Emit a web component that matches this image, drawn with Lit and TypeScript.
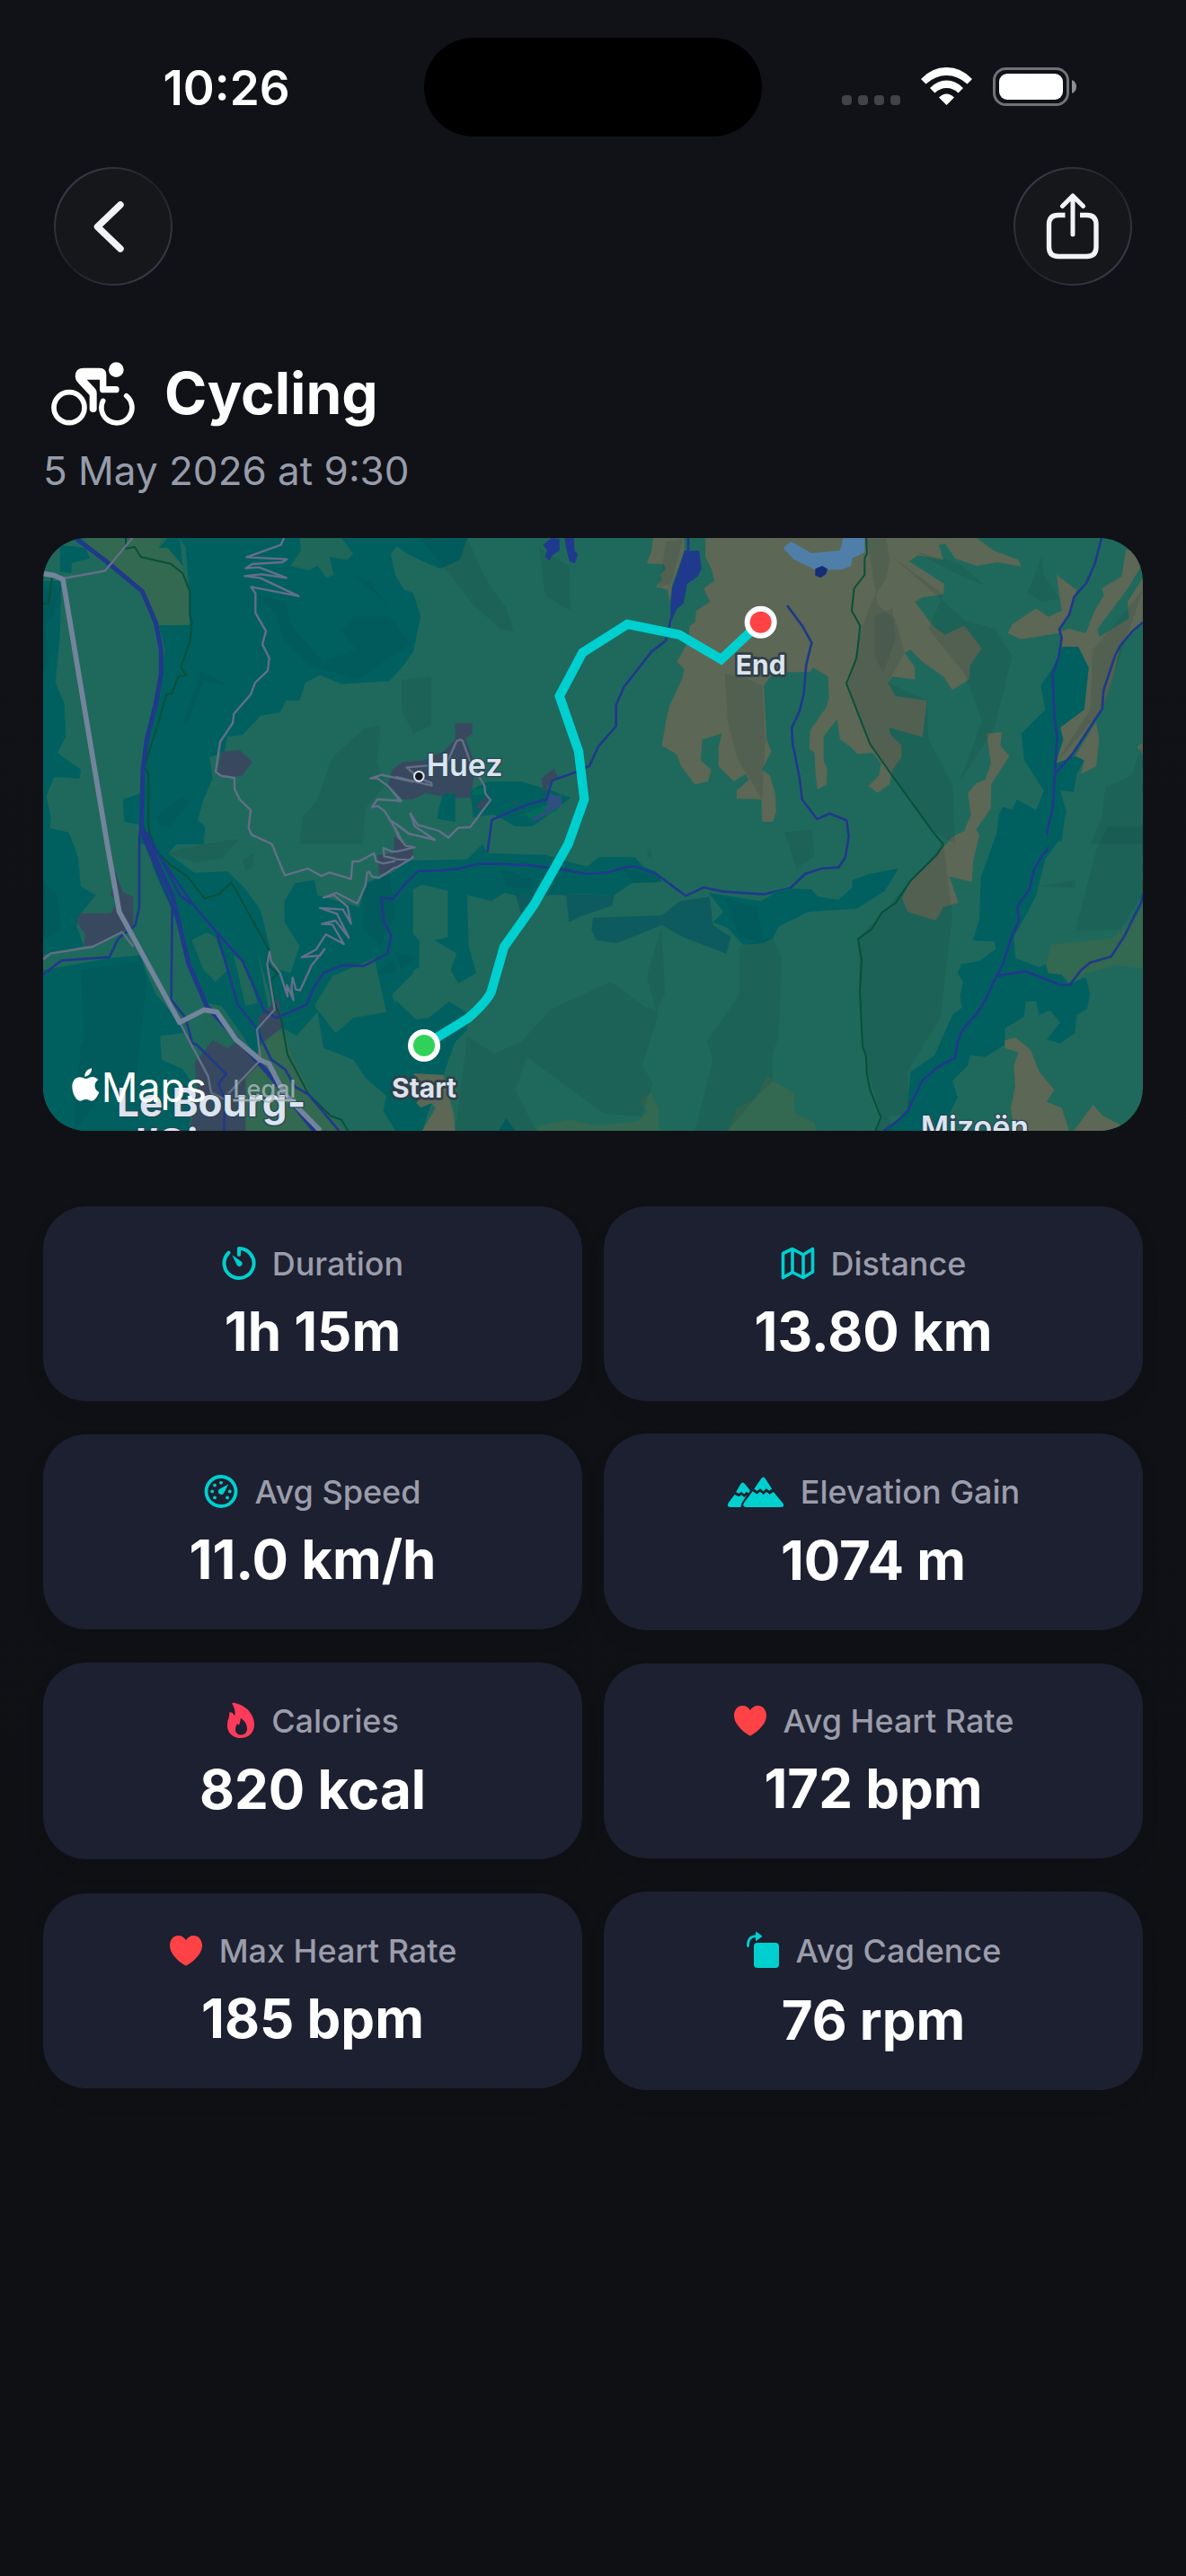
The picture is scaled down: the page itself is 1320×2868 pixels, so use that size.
import { LitElement, html, css, svg } from 'lit';
import { customElement, property } from 'lit/decorators.js';

const stats = [
  { icon: 'timer', label: 'Duration', value: '1h 15m' },
  { icon: 'map', label: 'Distance', value: '13.80 km' },
  { icon: 'gauge', label: 'Avg Speed', value: '11.0 km/h' },
  { icon: 'mountain', label: 'Elevation Gain', value: '1074 m' },
  { icon: 'flame', label: 'Calories', value: '820 kcal' },
  { icon: 'heart', label: 'Avg Heart Rate', value: '172 bpm' },
  { icon: 'heart', label: 'Max Heart Rate', value: '185 bpm' },
  { icon: 'rotate', label: 'Avg Cadence', value: '76 rpm' },
];

// the taller symbols make their cards slightly taller
const icons = {
  timer: html`
    <svg width="38" height="43" viewBox="0 0 38 43" fill="none" stroke="#00cfcf" stroke-width="4" stroke-linecap="round" stroke-linejoin="round">
      <path d="M19 12V5A16.500 16.500 0 1 1 7.500 9.700" />
      <path d="M11.300 12.200l9.600 6.700a3.200 3.200 0 1 1-4.300 4.300z" fill="#00cfcf" stroke="none" />
    </svg>`,
  map: html`
    <svg width="38" height="43" viewBox="0 0 38 43" fill="none" stroke="#00cfcf" stroke-width="3.600" stroke-linejoin="round">
      <path d="M2.500 10.500L13 5.500l12 6.500 10.500-6.500v25.500L25 37.500l-12-6-10.500 6z" />
      <path d="M13 5.500v26M25 12v25.500" />
    </svg>`,
  gauge: html`
    <svg width="38" height="43" viewBox="0 0 38 43" fill="#00cfcf">
      <circle cx="19" cy="21.500" r="16.500" fill="none" stroke="#00cfcf" stroke-width="3.800" />
      <circle cx="19" cy="11.800" r="1.900" />
      <circle cx="12" cy="14.600" r="1.900" />
      <circle cx="9.200" cy="21.500" r="1.900" />
      <circle cx="12" cy="28.400" r="1.900" />
      <circle cx="26" cy="28.400" r="1.900" />
      <circle cx="28.800" cy="21.500" r="1.900" />
      <path d="M27.200 13.600l-5 9.600a3.400 3.400 0 1 1-4.800-4.500z" />
    </svg>`,
  mountain: html`
    <svg width="64" height="45" viewBox="0 0 64 45" fill="#00cfcf">
      <path d="M38 8.500q2.500-4 5 0l7.200 11.200-3 2.100-3.400-2.500-3.200 3.100-3.400-3.200-3.600 2.800-3.300-2.300z" />
      <path d="M28.600 22.200l4.900 3.300 3.500-2.700 3.600 3.300 3.500-3.100 3.600 2.700 4.100-2.800 10.500 12.600q2.500 4-2 4.500H21.500q-5-.500-2.300-5z" />
      <path d="M15.500 14q2.200-3.200 4.400 0l6 7.600-1.700 2.800-2.200-1.400-2.800 2.600-3-2.600-2.700 1.800-3.400-1.600z" />
      <path d="M8.600 25.900l4.800 2.300 2.700-1.900 3.200 2.700 3-2.500-4.800 7.500q-2.500 3.500-1.500 6H4q-4.500-.500-2.500-4.500z" />
    </svg>`,
  flame: html`
    <svg width="32" height="45" viewBox="0 0 32 45">
      <path fill="#ff3b5c" fill-rule="evenodd" d="M6.500 4C6 2.800 7 2.500 9 3c12 2.300 22 12 22 24 0 9-6.500 15-15 15S1 36.500 1 28c0-6 2.500-9 2.300-13.500C3.300 13 5 12.800 6.500 14c1.500 1.300 2 2.300 2.500 3.500 1.800-4.500-.5-9.500-2.500-13.500zM15.500 20c.5 4-1 5.500-1.500 8-.8-.8-1.200-1.500-2-2-1 2-2 4-2 6.500 0 4 3 6 6.500 6s6.500-2.500 6.500-7c0-5-3-9.500-7.500-11.500z" />
    </svg>`,
  heart: html`
    <svg width="38" height="43" viewBox="0 0 38 43">
      <path fill="#ff4245" d="M19 38.500c-1 0-18-10-18-22.500C1 9.500 5.200 5 10.500 5c3.700 0 6.700 2 8.500 5.300C20.800 7 23.800 5 27.500 5 32.800 5 37 9.500 37 16c0 12.500-17 22.500-18 22.500z" />
    </svg>`,
  rotate: html`
    <svg width="38" height="47" viewBox="0 0 38 47" fill="#00cfcf">
      <rect x="9" y="15" width="28" height="28" rx="4" />
      <path d="M2.500 18.500C2 11.500 5.500 7.700 11.500 7.700" fill="none" stroke="#00cfcf" stroke-width="2.800" stroke-linecap="round" />
      <path d="M11 3.500q0-1.500 1.200-.5l5.500 4q1 .8 0 1.600l-5.500 4q-1.200.8-1.200-.6z" />
    </svg>`,
};

@customElement('route-map')
class RouteMap extends LitElement {
  static styles = css`
    :host {
      display: block;
      overflow: hidden;
      border-radius: 48px;
      background: #1f695c;
    }

    .map {
      display: block;
      width: 100%;
      height: auto;
      font-family: Inter, 'Liberation Sans', sans-serif;
    }

    .forest { fill: #006060; }
    .meadow { fill: #1f6759; }
    .rock { fill: #5c6755; }
    .farm { fill: #336851; }
    .town { fill: #38495f; }
    .lake { fill: #1f3a8c; }
    .glacier { fill: #4f7ea9; }
    .scree { fill: #0d5b5e; }
    .shade { fill: #0a3038; opacity: 0.11; }

    .river, .border, .lane, .highway, .route {
      fill: none;
      stroke-linejoin: round;
    }

    .river { stroke: #20398a; stroke-width: 8; }
    .wide { stroke-width: 15; }
    .border { stroke: #08503a; stroke-width: 6; }
    .lane { stroke: #646f88; stroke-width: 7; }
    .highway { stroke: #73849c; stroke-width: 17; }
    .route { stroke: #00cfcf; stroke-width: 31; stroke-linejoin: miter; }

    .place {
      fill: #dbe4ef;
      stroke: #2c4654;
      stroke-width: 8;
      paint-order: stroke;
      font-size: 102px;
      font-weight: 600;
    }

    .city { font-size: 132px; font-weight: 700; }

    .pin-label {
      fill: #dde4ec;
      stroke: #323f49;
      stroke-width: 16;
      stroke-linejoin: round;
      paint-order: stroke;
      font-size: 90px;
      font-weight: 700;
      text-anchor: middle;
    }

    .brand { fill: #fff; font-size: 135px; }

    .legal {
      fill: #a9b9bd;
      opacity: 0.8;
      font-size: 81px;
      font-weight: 500;
      text-decoration: underline;
    }
  `;

  // terrain is drawn on six sheets, three across and two down
  renderNorth() {
    return svg`
      <g transform="translate(-24 -27)">
        <path class="forest" d="M480 27L500 60L512 200V318H410L430 400L415 520L360 720L350 880L290 900L295 975L345 985V1050H560V985L540 970L560 900L590 830L580 760L630 740L640 690L690 685L750 620L815 610L835 570L880 570L900 510L950 485L1020 515L1180 505L1230 450L1260 405L1285 290L1260 210L1230 200L1200 150L1185 80L1205 55L1240 80L1280 100L1350 130L1415 100L1440 27z" />
        <path class="meadow" d="M880 27H1020L1060 80L1040 100L980 90L995 150L970 160L940 120L910 135L850 120L885 70z" />
        <path class="farm" d="M165 27H420L410 60L470 60L490 130L512 200V318H410L360 200L250 120L180 80z" />
        <path class="forest" d="M24 170H85L80 360L65 510L95 580L100 690L72 745L150 800L145 830L60 825L35 890L50 960L40 1050H24zM80 50L165 60L180 95L120 110L118 145L80 140z" />
        <path class="forest" d="M410 60L440 27H480L490 120L440 60z" />
        <path class="town" d="M620 740L680 735L722 775L690 820L640 830L605 810zM1175 850L1190 800L1225 775L1290 770L1360 740L1400 700V645H1457V680L1435 700L1470 790L1450 895H1380L1300 880L1260 900H1225z" />
        <path class="shade" d="M735 215L800 280L825 360L910 450L1075 500L1160 440L1250 380L1180 290L1060 290L1020 340L1070 400L960 440L860 330L830 240z" />
        <path class="shade" d="M550 470L640 520L560 505L510 630L490 650L530 540zM1100 660L1150 650L1140 780L1170 850L1100 930L1090 1050H880L890 960L940 900L990 760zM1060 150L1140 190L1110 170L1180 260L1130 210zM24 200L85 190L60 280L30 320L45 420L24 480zM400 960L490 890L510 910L430 1010z" />
        <path class="border" d="M300 27V62L330 57L350 90L450 113L490 145L514 205V285L521 305L515 370L484 460L503 485L475 490L455 545L436 550L410 640L362 790L376 815V1010L392 1050M55 150L42 246H24" />
        <path class="river wide" d="M125 22L235 105L355 205L400 310L418 400V480L400 580L370 700L357 800L352 1010" />
        <path class="lane" d="M90 162L230 137L322 27M828 27L818 50L703 91L838 98L822 108L722 114L700 128L745 125L836 160L752 148L697 154L748 160L877 221L718 190L733 212V277L768 338L756 382L779 428L774 470L732 510L717 550L661 614L657 645L615 708L600 808L620 822L663 828V865L680 900L717 936L710 994L720 1018L790 1050" />
        <path class="lane" d="M1260 842L1155 818L1117 830L1140 830L1175 855L1220 905L1140 900L1122 926L1142 922L1165 940L1195 990L1220 1035M1185 970L1245 1015L1260 1018" />
      </g>
      <g transform="translate(1176 -27)">
        <path class="rock" d="M860 27L855 70L840 112L895 115L903 130L885 150L890 165L870 190L910 200L915 240L925 180L965 70V27z" />
        <path class="rock" d="M1035 27V90L1055 130L1065 170L1030 195L1050 240L1005 270L1000 310L982 320L980 370L940 440L965 465L960 490L915 590L905 630L890 720L940 750L955 790L1000 850L1045 840L1055 800L1020 770L1025 700L1090 680L1078 730L1080 790L1130 840L1170 815L1180 835L1140 870V898L1222 900L1225 975H1260L1272 940L1268 880L1250 820L1225 800L1255 740L1240 700L1230 520L1265 475V27z" />
        <path class="forest" d="M250 870L310 840L420 840L520 870L585 895L540 930L460 990H400L330 950L260 960zM145 930L160 880L200 880V975L140 965z" />
        <path class="town" d="M487 830L530 795L545 830L520 840L495 880zM265 930L310 880L300 930zM385 900L420 920L400 915z" />
        <path fill="#006b58" d="M425 950L500 920L555 880L540 940L460 970zM258 865L300 862L290 885H258z" />
        <path fill="#2f4f80" d="M515 880L555 890V920L460 975L455 965L500 940z" />
        <path class="shade" d="M80 27H240L300 160L370 260L395 340L350 330L260 250L190 160zM1100 480L1110 640L1140 760L1225 900L1235 700L1225 520L1160 490zM480 60L580 120L585 270L620 290L500 220zM20 500L120 490V650L60 680L20 600zM905 40L960 30L920 180L880 190z" />
        <path class="lake" d="M965 70H1015L1022 130L1010 155L975 180L972 195L962 245L940 265L925 297H918L920 240L925 190L940 150zM520 27L548 30V70L525 85L515 103L500 90L507 68L493 50zM565 27H597L598 70L610 80L600 112L582 105L570 60z" />
        <path class="river" d="M978 27V70M920 297L903 370L855 407L763 525L737 585V655L678 723L648 788L600 810L523 837L505 900L440 918L322 968L303 1114" />
        <path class="lane" d="M0 825L122 854L120 845L80 830L38 793L170 782L205 705L218 700L225 705L250 775L298 855L300 880L318 902L250 993L210 995L177 1028L145 1005L75 985L50 947L65 990L132 1035L48 1015L0 980M-14 868L18 907L0 902" />
      </g>
      <g transform="translate(2436 -27)">
        <path class="rock" d="M0 27V475H125L135 460L185 490L188 560L180 590L125 670L122 730L140 745L143 820L150 868L180 850L182 800L170 770V690L215 632L225 700L260 725L282 748L335 745L362 780L355 820L320 855L350 878L390 850L400 800L430 760V720L390 680V660L500 692L515 570L410 555L385 510L400 490L475 500V460L440 410L460 400L500 440L570 490L600 535L655 500L660 450L698 395L640 320L575 350L535 320L475 240L500 225L570 215L573 180L455 105L485 85L570 100L555 50L575 45L610 95L680 120L750 108L830 122L820 100L740 70L680 27z" />
        <path class="rock" d="M948 150L1015 200L990 280L955 345L830 365L785 345L800 315L880 262L920 290L965 270z" />
        <path class="rock" d="M1180 65L1215 75L1230 120L1190 190L1130 270L1085 330L1090 358L1190 295L1185 240L1236 160V310L1160 390L1140 480L1100 600L1000 750L960 790L945 780L970 700L960 660L1040 600L1055 460L1020 390H965L960 340L990 330L1045 345L1075 270L1105 220L1100 195L1165 155zM1080 640L1090 700L1080 790L1030 815L1040 770L1010 755zM1236 710L1218 725L1236 750z" />
        <path class="rock" d="M715 680L765 675L760 720L790 755L730 850L728 930L680 1000L690 1020L670 1100L665 1175L590 1158L620 1245L570 1260L545 1305L450 1275L432 1230L460 1170L548 1085L600 1025L640 1005L662 950L652 880L680 845L710 835L728 780z" />
        <path class="forest" d="M970 390H1020L1055 460L1040 600L960 660L970 700L945 780L1010 755L1040 770L1015 815L1005 875L960 870L980 940L970 1000L965 1040H745L755 950L770 925L800 935L815 900L880 935L905 870L840 770L830 680L910 600L895 520L935 460z" />
        <path class="shade" d="M315 30H380L390 100L380 160L330 240L300 320L250 520L330 720L540 1010L610 1050L600 850L520 700L515 570L385 510L440 410L410 300L350 250z" />
        <path class="shade" d="M485 75L620 110L710 185L640 160L560 120zM850 210L900 85L905 150L960 230L900 240zM400 90L570 215L520 330L640 480L700 640L620 850L740 660L800 420L740 330L640 300zM1236 200L1070 400L1060 600L945 780L1100 600zM340 290L400 260L410 360L370 480L340 420zM1110 860L1200 820L1236 700V1050H1060L1100 960z" />
        <path class="glacier" d="M60 38L130 78L225 68L235 27H307V75L265 95L262 120L230 133H140L70 98L35 60z" />
        <path fill="#162d77" d="M142 130L165 120L183 130L178 148L160 160L142 152z" />
        <path class="border" d="M312 27L315 78L307 95V150L272 195L264 270L292 320L280 428L246 513L325 715L400 822L540 1015L570 1050" />
        <path class="river" d="M48 252L100 322L130 377L112 450L104 545L90 605L64 660L66 710L90 830L98 900L148 966L190 947L247 970L254 1025L242 1094" />
        <path class="river" d="M1098 27L1075 115L1047 178L1007 223L990 283L957 332L965 360L955 425L935 482L940 625L950 690L942 815L935 930L917 1000V1068M1236 308L1200 340L1160 387L1143 420L1105 535L1100 598L1000 750L942 815" />
      </g>`;
  }

  renderSouth() {
    return svg`
      <g transform="translate(-24 963)">
        <path class="forest" d="M24 0L110 20L140 100L150 200L200 230L150 290L135 330L160 400L24 430zM24 480L245 440L350 430L365 480L400 560L450 620L500 690L415 700L420 780L490 810L530 870L510 1017H60L24 960z" />
        <path class="forest" d="M350 0H565L560 55L470 60L440 90L530 155L640 150L700 210L750 280L780 400L790 470L850 490L880 400L830 320V250L865 190L930 180L940 230L1080 270L1100 190L1180 160L1260 120V490L1190 560L1200 600L1260 640V1017H1200L1160 950L1170 900L1100 840L1060 780L1010 760L960 740L940 620L870 700L800 660L780 560L740 420L790 680L740 780L690 700L620 600L570 590L540 520L450 270L395 150z" />
        <path class="meadow" d="M520 380L570 355L600 370L640 480L600 520L560 480zM660 430L700 460L740 590L700 600zM560 610L610 620L670 720L600 760L550 720z" />
        <path class="meadow" d="M990 500L1130 440L1170 620L1060 640L1000 690L930 600z" />
        <path class="farm" d="M700 840L780 670L830 690L850 760L920 900L990 970L1030 1017H700z" />
        <path class="town" d="M265 150L290 220L325 235V330L290 350L210 395L160 400L165 360L135 320L150 290H250L270 250L250 230zM530 790L590 715L640 740L670 720L750 790L700 840V1017H510L540 900zM740 640L810 575L825 670L760 720zM1195 35L1225 50L1259 75V110L1190 150L1145 160L1140 95L1195 90z" />
        <path class="shade" d="M24 180L70 230L85 340L24 380zM150 480L350 450L370 520L330 880L220 900L130 1017V880L160 700zM430 90L560 60L680 40L620 110L530 120zM690 110L730 90L720 140L700 150zM1095 200L1180 160L1200 300L1150 400L1090 340zM145 740L165 710V810L150 800zM1140 490L1190 445L1220 490z" />
        <path class="border" d="M376 0L380 25L405 85L450 130L505 167L563 241L608 228L653 188L722 312L779 415L770 458L806 491L784 515L797 590L820 650L840 762L910 895L985 968L1020 980L1042 1017" />
        <path class="river" d="M350 0L345 40V270L332 330L275 375L245 437L85 448L24 495M350 20L455 270L452 580L500 640L522 725L535 728L635 827L610 860L630 915L628 1017" />
        <path class="river" d="M370 20L450 170L480 230L520 260M605 360L675 597L735 672L785 778L832 812L865 870L910 895L1012 1017" />
        <path class="river wide" d="M352 0L400 110L455 230L510 460L570 600L780 830L930 1017" />
        <path class="river" d="M1259 167L1192 243L1152 238L1162 317L1186 365L1174 425L1095 466L1022 464L960 490L930 535L902 597L802 640L762 615L690 450L600 350L520 255L350 10" />
        <path class="lane" d="M788 60L831 164L908 141L953 166L980 154L1052 176L1057 117H1079L1129 90L1136 117L1160 124L1259 104L1200 108L1163 100L1160 72L1190 85L1259 70" />
        <path class="lane" d="M1195 0L1215 45L1240 70M1259 100L1145 172L1122 168L1113 152L1106 155L1100 198L1073 258L1003 222L960 238L995 230L1040 268L1052 325L1025 278L948 273L1005 292L1045 372L1000 315L955 326L990 328L1028 393L968 361L935 412L887 437L948 432L964 410L920 465L882 548L868 545L857 505L853 540L860 580L838 530L840 568L815 490L785 450L780 418L772 460L797 612L738 678L750 780L640 895" />
        <path class="lane" d="M24 445L48 425L190 402L288 353L325 402M480 655L575 835L585 890L630 912" />
      </g>
      <g transform="translate(1176 963)">
        <path class="forest" d="M0 115L240 110L290 60L310 90L500 95L640 135L680 103H800L830 135L870 150L890 185L790 190L730 230L620 225L420 235L365 222L320 250L240 230L245 400L270 490L210 525L185 480L205 425L130 380L175 370V215L90 195L50 215V350L80 380V470L0 515z" />
        <path class="scree" d="M400 225L560 225L730 230L725 265L620 300L580 320L570 230L480 225L420 290zM660 305L890 298L950 250L1050 235L1060 330L1120 370L1105 425L960 370L890 330L740 390L670 380L655 345z" />
        <path class="forest" d="M1045 222L1220 250L1265 225V370L1230 390L1160 395L1110 340L1060 320L1095 285zM0 580L70 645L110 640L180 585L235 620L240 680L200 720L160 830L120 925L90 1017H0zM345 1017L370 975L400 1017z" />
        <path class="rock" d="M60 825L160 830L195 960L200 1017H90L135 940L120 925L85 940L70 925L100 880z" />
        <path class="farm" d="M475 1000L580 980L680 1000L810 985L840 950L815 920L850 890L880 940V1017H475zM1110 1017L1140 940L1200 910L1240 835L1265 850V1017z" />
        <path class="town" d="M0 35L50 70L55 105L0 140z" />
        <path class="shade" d="M520 610L720 520L830 600L880 620L825 800L860 860L820 970L700 960L560 860L440 770L400 880L470 1017H200L240 700L330 760L420 720zM890 330L900 560L870 620L840 500zM1150 400L1260 370V850L1200 910L1110 1017H1000L1060 780L1040 720L1150 560zM350 140L450 170L460 210L370 200zM1100 240L1210 270L1230 390L1150 370z" />
        <path class="shade" d="M850 65L858 110L840 95zM760 140L890 170L870 190L790 185zM0 420L70 440L20 480z" />
        <path class="river" d="M1318 207L1230 227L1095 218L1030 204L970 232L872 160L805 135H775L712 153L642 159L550 143L450 130L303 124L272 126L212 142L147 148L77 149L30 195L-8 243" />
        <path class="lane" d="M0 5L15 40L35 65L65 70L0 85M58 105L0 140M0 110L45 112" />
      </g>
      <g transform="translate(2436 963)">
        <path class="forest" d="M968 30L910 110L880 230L860 270L805 370L810 440L890 470L915 460L920 490L965 495L985 525L1045 505L1060 560L1050 610L1015 630L1010 690L960 725L915 712L960 655L925 615L890 630L880 585H845L840 635L775 675V730L710 770L660 765L650 800L600 850L618 905L590 960L600 1017H370L450 950L460 820L540 765L600 630L632 605L625 570L635 520L618 490L630 460L690 450L745 410L740 385L668 382L690 310L695 170L745 30z" />
        <path class="forest" d="M0 220L50 208L130 210L150 235L220 245L265 205V180L320 160L420 140L375 215L280 275L120 285L20 335L0 375z" />
        <path class="farm" d="M930 395L1130 375L1170 345L1236 270V475L1150 465L1050 490L1000 525L965 495L920 490L912 460zM0 850L70 890L75 960L140 990L145 1017H0z" />
        <path class="rock" d="M775 715L810 705L860 745L890 820L940 880L915 920L965 940L990 1017H805L795 940L810 870L805 800L820 755L775 740zM1005 1017L1070 930L1100 965L1165 1000L1140 1017z" />
        <path class="shade" d="M285 376L365 290L570 60L600 300L560 640L450 820L460 960L361 972L320 820L300 735zM365 350L400 340L480 430V460L370 520zM320 770L345 755L340 820L400 1017H343L361 972zM1080 80L1120 0H1236V225L1160 345L1010 350zM880 200L1010 180V205zM40 20L130 10L140 100L80 140zM0 370L30 440L20 700L0 760z" />
        <path class="border" d="M570 60L548 95L460 182L410 256L364 288L330 344L285 376L297 445L291 550L300 735L312 770L314 822L325 880L361 972L343 1017" />
        <path class="river" d="M242 104L220 137L163 141L108 159L58 207M917 70V78L900 97L872 148L858 210L817 267L822 315L795 375L770 457L737 520L712 578L680 627L632 682L618 720L609 773L550 805L500 848L452 948L420 982L370 1017M750 500L843 484L962 530H992L1030 480L1060 455L1130 435L1175 365L1230 255L1236 225" />
      </g>
      <path class="highway" d="M0 119L36 125L66 138L214 1023L254 1248L456 1618L538 1576L580 1583L644 1675L724 1743L754 1756L806 1858L926 1980" />`;
  }

  render() {
    return html`
      <svg class="map" viewBox="0 0 3672 1980" role="img" aria-label="Route from Start to End">
        ${this.renderNorth()} ${this.renderSouth()}
        <circle cx="1255" cy="796" r="16" fill="#15181e" stroke="#dbe4ef" stroke-width="6" />
        <text class="place" x="1280" y="795">Huez</text>
        <text class="place" x="2930" y="2003">Mizoën</text>
        <text class="place city" x="246" y="1931">Le Bourg-</text>
        <text class="place city" x="262" y="2066">d’Oisans</text>
        <path class="route" d="M1272 1695L1419 1604Q1480 1550 1496 1516L1539 1366L1639 1225L1753 1023L1807 873L1788 713L1724 528L1801 383L1951 288L2124 323L2264 405L2396 281" />
        <circle cx="2396" cy="281" r="45" fill="#ff4245" stroke="#fff" stroke-width="18" />
        <circle cx="1272" cy="1695" r="45" fill="#30d158" stroke="#fff" stroke-width="18" />
        <text class="pin-label" x="2396" y="455">End</text>
        <text class="pin-label" x="1272" y="1868">Start</text>
        <path fill="#fff" transform="translate(97 1771)" d="M65 0c2 12-8 27-23 28C40 15 52 2 65 0zM46 35c6 0 12-6 22-6 8 0 15 4 19 10-17 10-14 34 3 41-5 13-14 28-24 29-8 0-11-5-20-5s-13 5-20 5C14 109 0 84 0 62 0 42 12 30 25 30c9 0 15 5 21 5z" />
        <text class="brand" x="194" y="1883">Maps</text>
        <a href="#legal"><text class="legal" x="634" y="1868">Legal</text></a>
      </svg>
    `;
  }
}

@customElement('stat-card')
class StatCard extends LitElement {
  @property() icon = '';
  @property() label = '';
  @property() value = '';

  static styles = css`
    :host {
      display: block;
      padding: 42px 24px;
      border-radius: 48px;
      background: #1d2030;
      box-shadow: 0 12px 24px rgba(0, 0, 0, 0.05);
    }

    .label {
      display: flex;
      align-items: center;
      justify-content: center;
      gap: 18px;
      color: #9b9dab;
      font-size: 36px;
      font-weight: 500;
      line-height: 42px;
    }

    svg {
      display: block;
    }

    .value {
      margin-top: 18px;
      color: #fff;
      font-size: 60px;
      font-weight: 700;
      line-height: 72px;
      text-align: center;
    }
  `;

  render() {
    return html`
      <div class="label">${icons[this.icon]}<span>${this.label}</span></div>
      <div class="value">${this.value}</div>
    `;
  }
}

@customElement('app-root')
class AppRoot extends LitElement {
  static styles = css`
    :host {
      display: block;
      box-sizing: border-box;
      min-height: 100vh;
      background: linear-gradient(#111217, #0f1014);
      color: #fff;
      font-family: Inter, 'Liberation Sans', sans-serif;
    }

    .status-bar {
      display: grid;
      grid-template-columns: 1fr 376px 1fr;
      align-items: center;
      padding: 42px 32px 0;
    }

    .time {
      padding-top: 2px;
      text-align: center;
      font-size: 53px;
      font-weight: 600;
      line-height: 64px;
    }

    .island {
      height: 110px;
      border-radius: 55px;
      background: #000;
    }

    .indicators {
      display: flex;
      justify-content: center;
    }

    .toolbar {
      display: flex;
      justify-content: space-between;
      padding: 34px 60px 0;
    }

    .round-button {
      display: grid;
      place-items: center;
      width: 132px;
      height: 132px;
      padding: 0;
      border: 2px solid transparent;
      border-radius: 50%;
      background:
        linear-gradient(#16171a, #16171a) padding-box,
        linear-gradient(135deg, #363a47 15%, #1e2025 50%, #363a47 85%) border-box;
      cursor: pointer;
    }

    main {
      padding: 80px 48px 48px;
    }

    .title {
      display: flex;
      align-items: center;
      gap: 33px;
    }

    h1 {
      margin: 0;
      font-size: 64px;
      font-weight: 700;
      line-height: 80px;
    }

    .date {
      margin: 18px 0 47px;
      color: #969cab;
      font-size: 44px;
      line-height: 56px;
    }

    .stats {
      display: grid;
      grid-template-columns: 1fr 1fr;
      align-items: center;
      gap: 36px 24px;
      margin-top: 84px;
    }
  `;

  render() {
    return html`
      <div class="status-bar">
        <div class="time">10:26</div>
        <div class="island"></div>
        <div class="indicators">
          <svg width="262" height="44" viewBox="0 0 262 44" fill="#fff">
            <g fill="#424347">
              <rect x="0" y="31" width="11" height="11" rx="4" />
              <rect x="18" y="31" width="11" height="11" rx="4" />
              <rect x="36" y="31" width="11" height="11" rx="4" />
              <rect x="54" y="31" width="11" height="11" rx="4" />
            </g>
            <path d="M88 13Q100 0 116.500 0T145 13L139.500 18.500Q129 9 116.500 9T93.500 18.500zM98 23Q106 14.500 116.500 14.500T135 23L129.500 28.500Q124 23 116.500 23T103.500 28.500zM108 33.500Q116.500 25.500 125 33.500L116.500 42z" />
            <rect x="169.500" y="1.500" width="82" height="40" rx="13" fill="none" stroke="#717276" stroke-width="3" />
            <rect x="175" y="7" width="71" height="29" rx="9" />
            <path d="M256 14q5 2 5 7.500t-5 7.500z" fill="#8e8f92" />
          </svg>
        </div>
      </div>
      <nav class="toolbar">
        <button class="round-button" aria-label="Back">
          <svg width="60" height="60" viewBox="0 0 60 60" fill="none" stroke="#f2f2f7" stroke-width="7.500" stroke-linecap="round" stroke-linejoin="round">
            <path d="M38 6L12.500 30.500L38 55" />
          </svg>
        </button>
        <button class="round-button" aria-label="Share">
          <svg width="60" height="76" viewBox="0 0 60 76" fill="none" stroke="#f2f2f7" stroke-width="5.400" stroke-linecap="round" stroke-linejoin="round">
            <path d="M21.500 25.500H14Q3.500 25.500 3.500 36V61Q3.500 71.500 14 71.500H45.500Q56 71.500 56 61V36Q56 25.500 45.500 25.500H38" stroke-linecap="butt" />
            <path d="M30 47V4M18.500 15.500L30 4L41.500 15.500" stroke-width="5" />
          </svg>
        </button>
      </nav>
      <main>
        <div class="title">
          <svg width="102" height="71" viewBox="54 67 306 213" fill="#fff">
            <g fill="none" stroke="#fff" stroke-width="17" stroke-linecap="round">
              <circle cx="141" cy="219" r="51" />
              <path d="M254 197A51 51 0 1 0 332 180" />
            </g>
            <circle cx="298" cy="93" r="25" />
            <path d="M190 87h52q23 0 23 23v38h33q10 0 10 11t-10 11h-44q-11 0-11-11v-33h-43l28 30q5 6 5 14v54q0 11-12 11t-12-11v-46l-38-41q-10-11-10-22 0-28 29-28z" />
          </svg>
          <h1>Cycling</h1>
        </div>
        <p class="date">5 May 2026 at 9:30</p>
        <route-map></route-map>
        <section class="stats">
          ${stats.map(
            (s) => html`<stat-card .icon=${s.icon} .label=${s.label} .value=${s.value}></stat-card>`
          )}
        </section>
      </main>
    `;
  }
}
